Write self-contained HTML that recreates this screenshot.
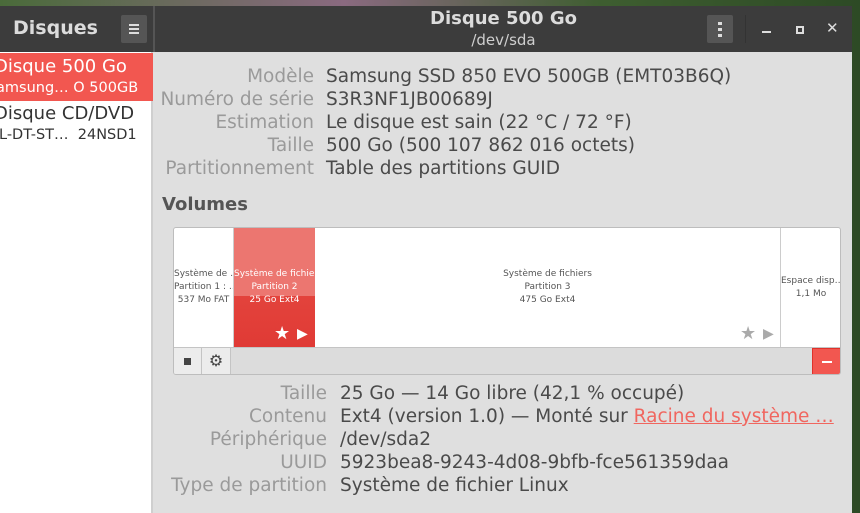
<!DOCTYPE html>
<html><head><meta charset="utf-8"><style>
*{margin:0;padding:0;box-sizing:border-box}
body{width:860px;height:513px;overflow:hidden;font-family:"DejaVu Sans","Liberation Sans",sans-serif;background:linear-gradient(90deg,#4a6b3a,#8a6a80 40%,#3e5e30 70%,#2d4a25);position:relative}
.win{position:absolute;left:0;top:6px;width:852px;height:507px;background:#dfdfdf}
.hdr{position:absolute;left:0;top:0;width:852px;height:46px;background:#3c3c3c;color:#dcdcdc}
.side{position:absolute;left:0;top:46px;width:153px;height:461px;background:#fff;border-right:2px solid #cfcfcf}
.abs{position:absolute;white-space:nowrap}
.lbl{position:absolute;text-align:right;color:#9a9a9a;font-size:18.5px;white-space:nowrap}
.val{position:absolute;color:#4a4a4a;font-size:18.5px;white-space:nowrap}
.part{position:absolute;top:0;height:119px;font-size:9px;color:#555;text-align:center;line-height:13px;display:flex;flex-direction:column;justify-content:center;overflow:hidden;white-space:nowrap}
</style></head><body>
<div class="win">
<div class="hdr">
 <div class="abs" style="left:13px;top:11px;font-size:19px;font-weight:bold;color:#dcdcdc">Disques</div>
 <div class="abs" style="left:121px;top:9px;width:26px;height:28px;background:#555;border-radius:2px"><div style="position:absolute;left:8px;top:9px;width:10px;height:2px;background:#ddd;box-shadow:0 4px 0 #ddd,0 8px 0 #ddd"></div></div>
 <div class="abs" style="left:153px;top:0;width:2px;height:46px;background:#555"></div>
 <div class="abs" style="left:155px;top:2px;width:697px;text-align:center;font-size:18px;font-weight:bold;color:#dcdcdc">Disque 500 Go</div>
 <div class="abs" style="left:155px;top:25px;width:697px;text-align:center;font-size:15px;color:#cfcfcf">/dev/sda</div>
 <div class="abs" style="left:707px;top:9px;width:26px;height:28px;background:#555;border-radius:2px"><div style="position:absolute;left:11px;top:7px;width:4px;height:3px;background:#ddd;box-shadow:0 6px 0 #ddd,0 12px 0 #ddd"></div></div>
 <div class="abs" style="left:745px;top:9px;width:1px;height:28px;background:#333"></div>
 <div class="abs" style="left:762px;top:25px;width:9px;height:2px;background:#ddd"></div>
 <div class="abs" style="left:796px;top:20px;width:8px;height:8px;border:2px solid #ddd"></div>
 <div class="abs" style="left:826px;top:13px;font-size:15px;color:#ddd;font-weight:bold">✕</div>
</div>
<div class="side">
 <div class="abs" style="left:0;top:1px;width:153px;height:48px;background:#f25750;color:#fff">
  <div class="abs" style="left:-6px;top:3px;font-size:18px">Disque 500 Go</div>
  <div class="abs" style="left:-4px;top:27px;font-size:14.5px">amsung… O 500GB</div>
 </div>
 <div class="abs" style="left:-6px;top:51px;font-size:18px;color:#333">Disque CD/DVD</div>
 <div class="abs" style="left:-1px;top:75px;font-size:14.5px;color:#333">L-DT-ST…&nbsp;&nbsp;24NSD1</div>
</div>
<div class="lbl" style="left:150px;width:164px;top:60px">Modèle</div>
<div class="lbl" style="left:150px;width:164px;top:83px">Numéro de série</div>
<div class="lbl" style="left:150px;width:164px;top:106px">Estimation</div>
<div class="lbl" style="left:150px;width:164px;top:129px">Taille</div>
<div class="lbl" style="left:150px;width:164px;top:152px">Partitionnement</div>
<div class="val" style="left:326px;top:60px">Samsung SSD 850 EVO 500GB (EMT03B6Q)</div>
<div class="val" style="left:326px;top:83px">S3R3NF1JB00689J</div>
<div class="val" style="left:326px;top:106px">Le disque est sain (22 °C / 72 °F)</div>
<div class="val" style="left:326px;top:129px">500 Go (500 107 862 016 octets)</div>
<div class="val" style="left:326px;top:152px">Table des partitions GUID</div>
<div class="abs" style="left:162px;top:188px;font-size:18px;font-weight:bold;color:#555">Volumes</div>
<div class="abs" style="left:173px;top:221px;width:668px;height:148px;border:1px solid #bdbdbd;border-radius:3px;background:#fff;overflow:hidden">
 <div class="part" style="left:0;width:60px;border-right:1px solid #ccc">Système de …<br>Partition 1 : …<br>537 Mo FAT</div>
 <div class="part" style="left:60px;width:81px;background:linear-gradient(#ec7670 0,#ec7670 57%,#e3433c 57%,#e03a35);color:#fff">Système de fichiers<br>Partition 2<br>25 Go Ext4</div>
 <div class="abs" style="left:100px;top:95px;color:#fff;font-size:18px">★</div>
 <div class="abs" style="left:123px;top:98px;color:#fff;font-size:14px">▶</div>
 <div class="part" style="left:141px;width:466px;border-right:1px solid #ccc">Système de fichiers<br>Partition 3<br>475 Go Ext4</div>
 <div class="abs" style="left:566px;top:95px;color:#aaa;font-size:18px">★</div>
 <div class="abs" style="left:589px;top:98px;color:#aaa;font-size:14px">▶</div>
 <div class="part" style="left:607px;width:60px">Espace disp…<br>1,1 Mo</div>
 <div class="abs" style="left:0;top:119px;width:668px;height:28px;background:#dcdcdc;border-top:1px solid #c4c4c4">
  <div class="abs" style="left:0;top:0;width:28px;height:27px;background:#ececec;border-right:1px solid #c4c4c4"><div style="position:absolute;left:10px;top:10px;width:7px;height:7px;background:#444"></div></div>
  <div class="abs" style="left:28px;top:0;width:29px;height:27px;background:#ececec;border-right:1px solid #c4c4c4;font-size:16px;color:#444;text-align:center;line-height:26px">⚙</div>
  <div class="abs" style="left:638px;top:0;width:29px;height:27px;background:#f25750;border:1px solid #e0312a"><div style="position:absolute;left:9px;top:12px;width:10px;height:2px;background:#fff"></div></div>
 </div>
</div>
<div class="lbl" style="left:150px;width:177px;top:377px">Taille</div>
<div class="lbl" style="left:150px;width:177px;top:400px">Contenu</div>
<div class="lbl" style="left:150px;width:177px;top:423px">Périphérique</div>
<div class="lbl" style="left:150px;width:177px;top:446px">UUID</div>
<div class="lbl" style="left:150px;width:177px;top:469px">Type de partition</div>
<div class="val" style="left:340px;top:377px">25 Go — 14 Go libre (42,1 % occupé)</div>
<div class="val" style="left:340px;top:400px">Ext4 (version 1.0) — Monté sur <span style="color:#f0665f;text-decoration:underline">Racine du système …</span></div>
<div class="val" style="left:340px;top:423px">/dev/sda2</div>
<div class="val" style="left:340px;top:446px">5923bea8-9243-4d08-9bfb-fce561359daa</div>
<div class="val" style="left:340px;top:469px">Système de fichier Linux</div>
</div>
</body></html>
